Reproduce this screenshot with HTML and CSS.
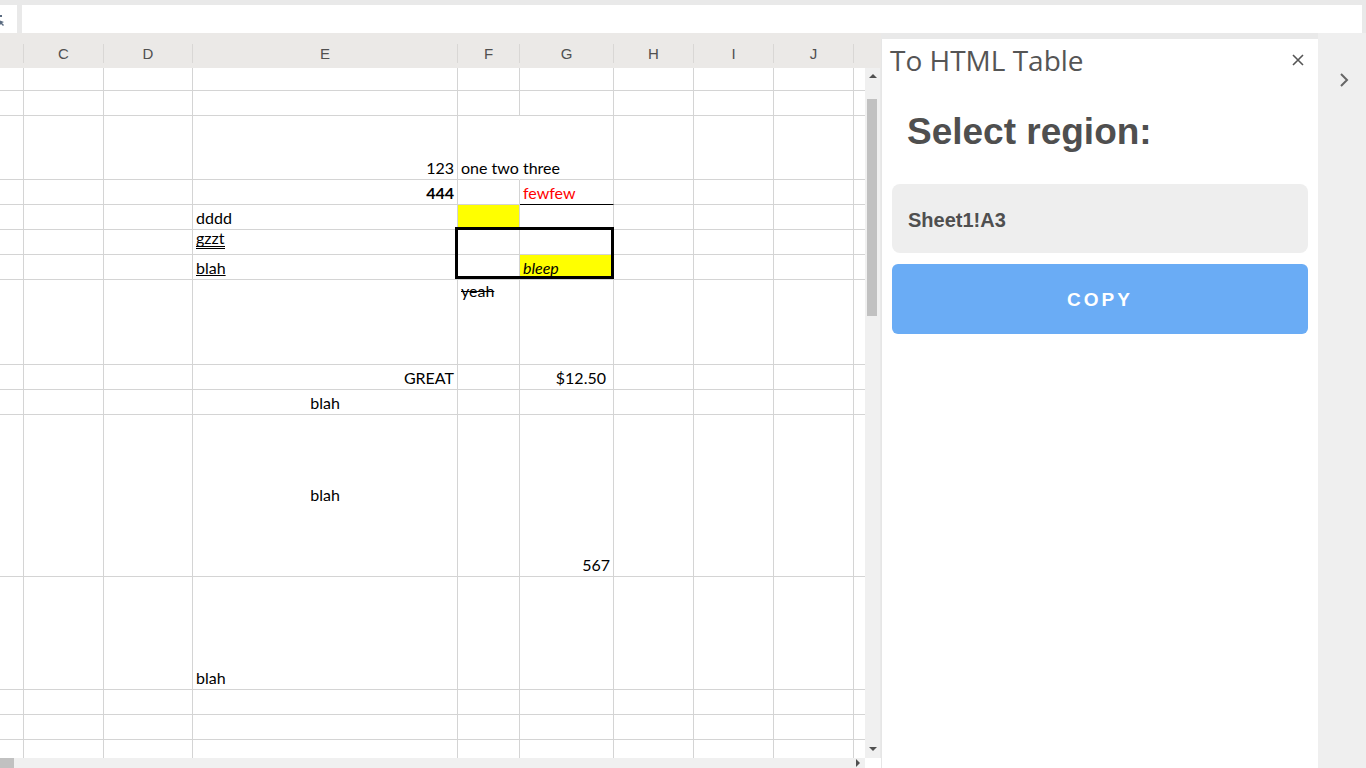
FILE: index.html
```html
<!DOCTYPE html>
<html lang="en">
<head>
	<meta charset="UTF-8">
	<title>To HTML Table</title>
	<link rel="stylesheet" href="styles.css">
</head>
<body>
	<div class="topbar">
		<div class="namebox">
			<svg width="8" height="14" viewBox="0 0 8 14"><path d="M0 3h3v2H0zM0 8l5 2-2 1 2 2-1 1-2-2-2 2z" fill="#5a6b80"/></svg>
		</div>
		<div class="formula"></div>
	</div>

	<div class="main">
		<div class="sheet">
			<div class="colhead">
				<div class="hc wb"><span></span></div>
				<div class="hc wc"><span>C</span></div>
				<div class="hc wd"><span>D</span></div>
				<div class="hc we"><span>E</span></div>
				<div class="hc wf"><span>F</span></div>
				<div class="hc wg"><span>G</span></div>
				<div class="hc wh"><span>H</span></div>
				<div class="hc wi"><span>I</span></div>
				<div class="hc wj"><span>J</span></div>
			</div>

			<div class="sheet-body">
				<div class="grid">
					<div class="row h23">
						<div class="c wb"></div><div class="c wc"></div><div class="c wd"></div><div class="c we"></div><div class="c wf"></div><div class="c wg"></div><div class="c wh"></div><div class="c wi"></div><div class="c wj"></div><div class="c wk"></div>
					</div>
					<div class="row h25">
						<div class="c wb"></div><div class="c wc"></div><div class="c wd"></div><div class="c we"></div><div class="c wf"></div><div class="c wg"></div><div class="c wh"></div><div class="c wi"></div><div class="c wj"></div><div class="c wk"></div>
					</div>
					<div class="row h64">
						<div class="c wb"></div><div class="c wc"></div><div class="c wd"></div><div class="c we right">123</div><div class="c wf spill">one two three</div><div class="c wg"></div><div class="c wh"></div><div class="c wi"></div><div class="c wj"></div><div class="c wk"></div>
					</div>
					<div class="row h25">
						<div class="c wb"></div><div class="c wc"></div><div class="c wd"></div><div class="c we right bold">444</div><div class="c wf"></div><div class="c wg red under-black">fewfew</div><div class="c wh"></div><div class="c wi"></div><div class="c wj"></div><div class="c wk"></div>
					</div>
					<div class="row h25">
						<div class="c wb"></div><div class="c wc"></div><div class="c wd"></div><div class="c we">dddd</div><div class="c wf yellow"></div><div class="c wg"></div><div class="c wh"></div><div class="c wi"></div><div class="c wj"></div><div class="c wk"></div>
					</div>
					<div class="row h25">
						<div class="c wb"></div><div class="c wc"></div><div class="c wd"></div><div class="c we"><span class="dbl">gzzt</span></div><div class="c wf"></div><div class="c wg"></div><div class="c wh"></div><div class="c wi"></div><div class="c wj"></div><div class="c wk"></div>
					</div>
					<div class="row h25">
						<div class="c wb"></div><div class="c wc"></div><div class="c wd"></div><div class="c we"><span class="ul">blah</span></div><div class="c wf"></div><div class="c wg yellow italic">bleep</div><div class="c wh"></div><div class="c wi"></div><div class="c wj"></div><div class="c wk"></div>
					</div>
					<div class="row h85">
						<div class="c wb"></div><div class="c wc"></div><div class="c wd"></div><div class="c we"></div><div class="c wf top"><span class="strike">yeah</span></div><div class="c wg"></div><div class="c wh"></div><div class="c wi"></div><div class="c wj"></div><div class="c wk"></div>
					</div>
					<div class="row h25">
						<div class="c wb"></div><div class="c wc"></div><div class="c wd"></div><div class="c we right">GREAT</div><div class="c wf"></div><div class="c wg right money">$12.50</div><div class="c wh"></div><div class="c wi"></div><div class="c wj"></div><div class="c wk"></div>
					</div>
					<div class="row h25">
						<div class="c wb"></div><div class="c wc"></div><div class="c wd"></div><div class="c we center">blah</div><div class="c wf"></div><div class="c wg"></div><div class="c wh"></div><div class="c wi"></div><div class="c wj"></div><div class="c wk"></div>
					</div>
					<div class="row h162">
						<div class="c wb"></div><div class="c wc"></div><div class="c wd"></div><div class="c we center middle">blah</div><div class="c wf"></div><div class="c wg right">567</div><div class="c wh"></div><div class="c wi"></div><div class="c wj"></div><div class="c wk"></div>
					</div>
					<div class="row h113">
						<div class="c wb"></div><div class="c wc"></div><div class="c wd"></div><div class="c we">blah</div><div class="c wf"></div><div class="c wg"></div><div class="c wh"></div><div class="c wi"></div><div class="c wj"></div><div class="c wk"></div>
					</div>
					<div class="row h25">
						<div class="c wb"></div><div class="c wc"></div><div class="c wd"></div><div class="c we"></div><div class="c wf"></div><div class="c wg"></div><div class="c wh"></div><div class="c wi"></div><div class="c wj"></div><div class="c wk"></div>
					</div>
					<div class="row h25">
						<div class="c wb"></div><div class="c wc"></div><div class="c wd"></div><div class="c we"></div><div class="c wf"></div><div class="c wg"></div><div class="c wh"></div><div class="c wi"></div><div class="c wj"></div><div class="c wk"></div>
					</div>
					<div class="row h25">
						<div class="c wb"></div><div class="c wc"></div><div class="c wd"></div><div class="c we"></div><div class="c wf"></div><div class="c wg"></div><div class="c wh"></div><div class="c wi"></div><div class="c wj"></div><div class="c wk"></div>
					</div>

					<!-- thick border drawn over F..G of the gzzt/blah rows -->
					<div class="boxed"></div>
				</div>

				<div class="vscroll">
					<span class="arr-up"></span>
					<span class="vthumb"></span>
					<span class="arr-down"></span>
				</div>
			</div>

			<div class="hscroll">
				<div class="htrack">
					<span class="hthumb"></span>
					<span class="arr-right"></span>
				</div>
				<div class="corner"></div>
			</div>
		</div>

		<div class="sidebar">
			<div class="side-head">
				<h3>To HTML Table</h3>
				<svg class="close" width="12" height="12" viewBox="0 0 12 12"><path d="M1 1l10 10M11 1L1 11" stroke="#555" stroke-width="1.6"/></svg>
			</div>
			<h1>Select region:</h1>
			<div class="region">Sheet1!A3</div>
			<div class="copy">COPY</div>
		</div>

		<div class="strip">
			<svg width="10" height="14" viewBox="0 0 10 14"><path d="M2 1l6 6-6 6" fill="none" stroke="#666" stroke-width="2"/></svg>
		</div>
	</div>
</body>
</html>
```

FILE: styles.css
```css
*{margin: 0;padding: 0;box-sizing: border-box;}
body{width: 1366px;height: 768px;overflow: hidden;background: #e9e9e9;font-family: "Liberation Sans", Arial, sans-serif;}

.topbar{height: 33px;padding: 5px 4px 0 0;display: flex;gap: 5px;}
.namebox{width: 17px;height: 28px;background: #fff;display: flex;align-items: center;overflow: hidden;}
.namebox svg{margin-left: -1px;}
.formula{flex: 1;height: 28px;background: #fff;}

.main{display: flex;height: 735px;}
.sheet{width: 881px;display: flex;flex-direction: column;}

.colhead{height: 35px;background: #ebe9e7;display: flex;}
.hc{padding: 11px 0 5px;font-size: 15px;color: #505050;}
.hc span{display: block;height: 19px;line-height: 19px;text-align: center;border-right: 1px solid #d9d7d5;}

.sheet-body{display: flex;height: 690px;}
.grid{width: 865px;overflow: hidden;background: #fff;position: relative;}
.row{display: flex;}
.h23{height: 23px;}
.h25{height: 25px;}
.h64{height: 64px;}
.h85{height: 85px;}
.h113{height: 113px;}
.h162{height: 162px;}

.wb{width: 24px;flex: none;}
.wc{width: 80px;flex: none;}
.wd{width: 89px;flex: none;}
.we{width: 265px;flex: none;}
.wf{width: 62px;flex: none;}
.wg{width: 94px;flex: none;}
.wh{width: 80px;flex: none;}
.wi{width: 80px;flex: none;}
.wj{width: 80px;flex: none;}
.wk{width: 30px;flex: none;}

.c{border-right: 1px solid #d4d4d4;border-bottom: 1px solid #d4d4d4;display: flex;align-items: flex-end;padding: 0 3px 1px;white-space: nowrap;font-family: Lato, "Open Sans", sans-serif;font-size: 16px;line-height: 20px;color: #000;}
.right{justify-content: flex-end;}
.center{justify-content: center;}
.middle{align-items: center;}
.top{align-items: flex-start;padding-top: 1px;}
.bold{font-weight: bold;}
.italic{font-style: italic;}
.red{color: #f00;}
.yellow{background: #ff0;}
.spill{border-right-color: transparent;}
.under-black{border-bottom-color: #000;}
.money{padding-right: 7px;}
.dbl{display: inline-block;line-height: 17px;border-bottom: 3px double #000;margin-bottom: 4px;}
.ul{text-decoration: underline;}
.strike{text-decoration: line-through;}

.boxed{position: absolute;left: 455px;top: 159px;width: 159px;height: 52px;border: 3px solid #000;}

.vscroll{width: 15px;background: #f0f0f0;display: flex;flex-direction: column;align-items: center;padding: 6px 0 7px;}
.arr-up{width: 0;height: 0;border-left: 4px solid transparent;border-right: 4px solid transparent;border-bottom: 4px solid #505050;}
.vthumb{width: 10px;height: 217px;background: #c1c1c1;margin-top: 21px;margin-left: -2px;}
.arr-down{width: 0;height: 0;margin-top: auto;border-left: 4px solid transparent;border-right: 4px solid transparent;border-top: 4px solid #505050;}

.hscroll{height: 10px;display: flex;}
.htrack{width: 865px;background: #f0f0f0;display: flex;align-items: center;}
.hthumb{width: 14px;height: 10px;background: #c1c1c1;}
.arr-right{width: 0;height: 0;margin-left: auto;margin-right: 5px;border-top: 4px solid transparent;border-bottom: 4px solid transparent;border-left: 4px solid #505050;}
.corner{flex: 1;background: #fff;}

.sidebar{width: 437px;margin-top: 6px;background: #fff;border-left: 1px solid #e6e6e6;padding: 0 10px 0 10px;color: #4f4f4f;}
.side-head{display: flex;align-items: center;justify-content: space-between;height: 42px;}
.side-head h3{font-family: "Open Sans", sans-serif;font-weight: normal;font-size: 28px;color: #555;margin-left: -2px;}
.close{margin-right: 4px;}
.sidebar h1{font-size: 37px;font-weight: bold;margin: 29px 0 0 15px;line-height: 44px;}
.region{margin-top: 30px;height: 69px;background: #eee;border-radius: 8px;padding-left: 16px;font-size: 20px;font-weight: bold;line-height: 72px;}
.copy{margin-top: 11px;height: 70px;background: #6aacf5;border-radius: 6px;color: #fff;font-size: 19px;font-weight: bold;letter-spacing: 3px;text-align: center;line-height: 71px;}

.strip{width: 48px;background: #efefef;padding: 40px 0 0 21px;}
```
